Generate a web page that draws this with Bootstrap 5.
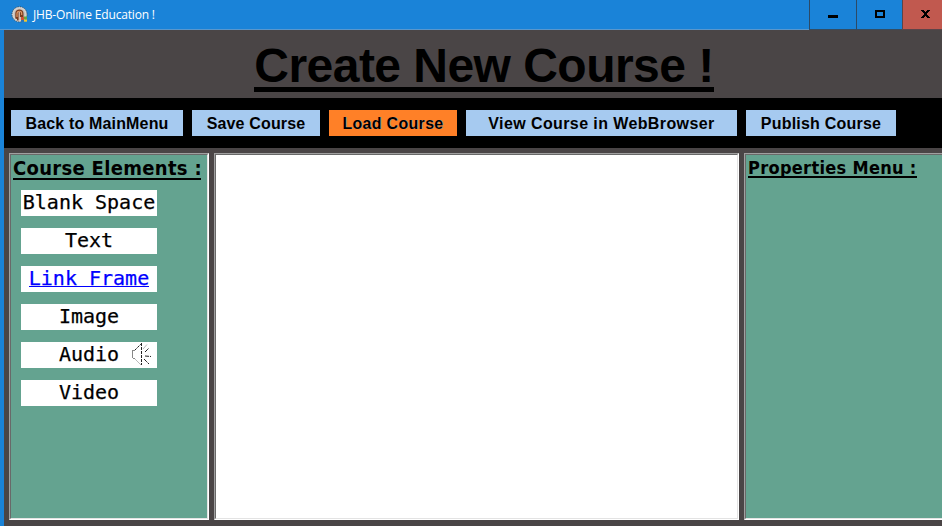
<!DOCTYPE html>
<html lang="en">
<head>
<meta charset="utf-8">
<title>JHB-Online Education !</title>
<link rel="stylesheet" href="https://cdn.jsdelivr.net/npm/bootstrap@5.3.0/dist/css/bootstrap.min.css">
<style>
body{width:942px;height:526px;overflow:hidden;background:#4a4546;color:#000;font-family:"Liberation Sans",Arial,sans-serif}
.window-frame{height:526px;border-left:4px solid #1a83d8}
.title-bar{height:30px;background:#1a83d8;border-bottom:1px solid #5a97cc;margin-left:-4px;padding-left:11px}
.title-bar .caption-text{font:12px/29px "Open Sans",sans-serif;color:#fff;margin-left:5px;letter-spacing:-.17px}
.win-btn{height:30px;border:0;border-left:1px solid #2c4a66;border-bottom:1px solid #334d63;border-radius:0;background:#1a83d8;padding:0}
.win-min{width:47px}.win-max{width:46px}.win-close{width:40px;background:#c1594f;border-color:#5c4449}
.page-heading{height:68px;padding-left:22px}
.page-heading h1{font-size:48px;line-height:56px;font-weight:700;margin:8px 0 0;height:54px;white-space:nowrap;letter-spacing:-.53px}
.page-heading h1 span{display:inline-block;height:54px;border-bottom:5px solid #000}
.tool-strip{height:50px;padding:12px 0 0 7px;gap:9px;background:#000}
.tool-strip .btn{height:26px;flex:none;border:0;border-radius:0;background:#a6caf0;color:#000;font-size:16px;font-weight:700;line-height:28px;padding:0;white-space:nowrap;letter-spacing:.16px}
.tool-strip .btn.hot{background:#ff8027;text-shadow:1px 0 #a6caf088;letter-spacing:.3px}
.tool-strip .w-view{letter-spacing:.4px}
.tool-strip .w-pub{letter-spacing:.22px}
.w-back{width:172px}.w-save{width:128px}.w-view{width:271px}.w-pub{width:150px}
.work-area{padding:5px 0 0 5px;gap:5px;height:372px}
.pane{height:367px;flex:none;border:1px solid;border-color:#a0a0a0 #fff #fff #a0a0a0}
.pane-in{height:365px;border:1px solid;border-color:#696969 #e3e3e3 #e3e3e3 #696969;background:#64a390}
.pane-in.blank{background:#fff}
.pane-elements{width:200px}.pane-canvas{width:525px}.pane-props{width:210px}
.pane h2{font-family:"DejaVu Sans Condensed","DejaVu Sans",sans-serif;font-stretch:condensed;font-weight:700;margin:0;white-space:nowrap;letter-spacing:.31px}
.pane h2 span{display:inline-block;border-bottom:2px solid #000}
.h-elements{font-size:20px;line-height:24px;padding:1px 0 0 2px;height:25px}
.h-elements span{height:24px;width:188px}
.h-props{font-size:18px;line-height:22px;padding:2px 0 0 2px}
.h-props span{height:21px;width:169px}
.tile-list{gap:12px;padding:10px 0 0 10px}
.tile{width:136px;height:26px;background:#fff;font:20px/24px "DejaVu Sans Mono",monospace;-webkit-text-stroke:.25px;white-space:nowrap;position:relative}
.tile.linked{color:#0000ff}
.tile.linked span{height:21px;border-bottom:1px solid #00f}
.tile svg{position:absolute;left:110px;top:0}
svg{display:block}
</style>
<script src="https://cdn.jsdelivr.net/npm/bootstrap@5.3.0/dist/js/bootstrap.bundle.min.js"></script>
</head>
<body>
<div class="window-frame">
  <header class="title-bar d-flex">
    <svg width="17" height="17" viewBox="0 0 17 17" style="margin-top:6px">
      <circle cx="8.5" cy="8.3" r="7.6" fill="#d5d2ce" stroke="#3d4852" stroke-width=".9" stroke-dasharray="1.2 1.2"/>
      <circle cx="8.5" cy="8.3" r="5.7" fill="#c9c1ba"/>
      <path d="M4.3 12.5V7.5C4 2 12.8 2 12.5 7.5V11H8.6V14.5H6V13Z" fill="#7a3d20"/>
      <path d="M6 11V7.5C6 4.5 10.8 4.5 10.7 7.5V9" fill="none" stroke="#df9867" stroke-width="1.2"/>
      <path d="M8.2 6v9" stroke="#eee4da"/>
      <path d="M10 11h3v3h-3z" fill="#d05135"/><path d="M13 10.5h3v3h-3z" fill="#63aa46"/><path d="M10 14h3v2h-3z" fill="#2876bf"/><path d="M13 13.5h3v2.200h-3z" fill="#f2c72f"/>
    </svg>
    <span class="caption-text">JHB-Online Education !</span>
    <div class="d-flex ms-auto">
      <button class="win-btn win-min" aria-label="Minimize"><svg width="46" height="29"><path d="M18 15h10v3H18z"/></svg></button>
      <button class="win-btn win-max" aria-label="Maximize"><svg width="45" height="29"><path d="M19 11h8v6h-8z" fill="none" stroke="#000" stroke-width="2"/></svg></button>
      <button class="win-btn win-close" aria-label="Close"><svg width="39" height="29" shape-rendering="crispEdges"><path d="M18 10h3v1h1v1h1v-1h1v-1h3v1h-1v1h-1v1h-1v2h1v1h1v1h1v1h-3v-1h-1v-1h-1v1h-1v1h-3v-1h1v-1h1v-1h1v-2h-1v-1h-1v-1h-1z"/></svg></button>
    </div>
  </header>
  <div class="page-heading d-flex justify-content-center"><h1><span>Create New Course !</span></h1></div>
  <nav class="tool-strip d-flex">
    <button class="btn w-back">Back to MainMenu</button>
    <button class="btn w-save">Save Course</button>
    <button class="btn w-save hot">Load Course</button>
    <button class="btn w-view">View Course in WebBrowser</button>
    <button class="btn w-pub">Publish Course</button>
  </nav>
  <main class="work-area d-flex">
    <aside class="pane pane-elements"><div class="pane-in">
      <h2 class="h-elements"><span>Course Elements :</span></h2>
      <div class="tile-list d-flex flex-column">
        <div class="tile d-flex justify-content-center"><span>Blank Space</span></div>
        <div class="tile d-flex justify-content-center"><span>Text</span></div>
        <div class="tile linked d-flex justify-content-center"><span>Link Frame</span></div>
        <div class="tile d-flex justify-content-center"><span>Image</span></div>
        <div class="tile d-flex justify-content-center"><span>Audio</span>
          <svg width="24" height="26" fill="none" stroke="#222">
            <path d="M10.500 1v22M3.500 8.500 10 2" stroke-dasharray="3 1"/>
            <path d="M1.500 8v8M2 8.500h2M2 16.500h2" stroke="#888"/>
            <path d="M4 17l6 6M12 7l4-4.500" stroke="#bbb"/>
            <path d="M14 10l4-4M14 14l6 .5M13 17l5 5" stroke-dasharray="4 1"/>
          </svg></div>
        <div class="tile d-flex justify-content-center"><span>Video</span></div>
      </div>
    </div></aside>
    <section class="pane pane-canvas"><div class="pane-in blank"></div></section>
    <aside class="pane pane-props"><div class="pane-in"><h2 class="h-props"><span>Properties Menu :</span></h2></div></aside>
  </main>
</div>
</body>
</html>
